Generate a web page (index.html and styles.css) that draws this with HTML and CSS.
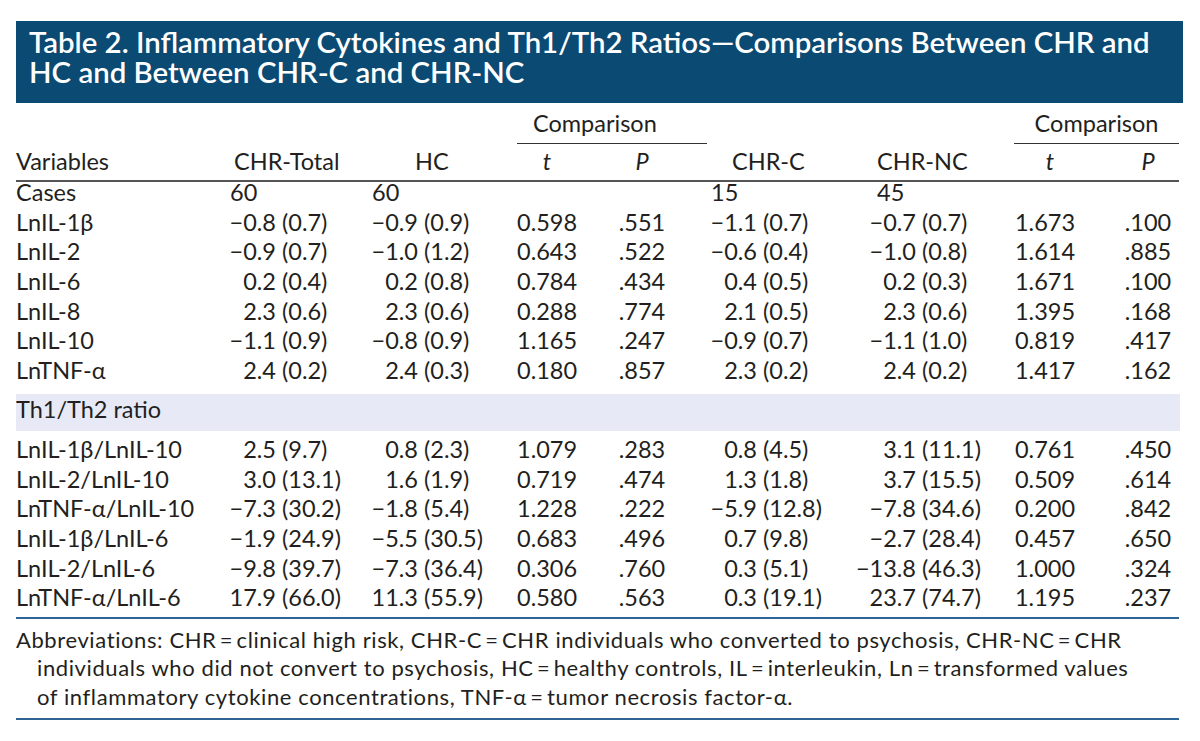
FILE: index.html
```html
<!DOCTYPE html>
<html lang="en">
<head>
<meta charset="utf-8">
<title>Table 2. Inflammatory Cytokines and Th1/Th2 Ratios</title>
<link rel="stylesheet" href="styles.css">
</head>
<body>
<div class="page">
  <div class="title">Table 2. Inflammatory Cytokines and Th1/Th2 Ratios—Comparisons Between CHR and<br>HC and Between CHR-C and CHR-NC</div>
  <div class="table">
    <div class="row group">
      <div class="g1">Comparison</div>
      <div class="g2">Comparison</div>
    </div>
    <div class="row head">
      <div>Variables</div>
      <div>CHR-Total</div>
      <div>HC</div>
      <div><i>t</i></div>
      <div><i>P</i></div>
      <div>CHR-C</div>
      <div>CHR-NC</div>
      <div><i>t</i></div>
      <div><i>P</i></div>
    </div>
    <div class="body">
      <div class="row cases">
        <div>Cases</div><div>60</div><div>60</div><div></div><div></div><div>15</div><div>45</div><div></div><div></div>
      </div>
      <div class="row">
        <div>LnIL-1β</div><div><span class="n">−0.8</span> (0.7)</div><div><span class="n">−0.9</span> (0.9)</div><div>0.598</div><div>.551</div><div><span class="n">−1.1</span> (0.7)</div><div><span class="n">−0.7</span> (0.7)</div><div>1.673</div><div>.100</div>
      </div>
      <div class="row">
        <div>LnIL-2</div><div><span class="n">−0.9</span> (0.7)</div><div><span class="n">−1.0</span> (1.2)</div><div>0.643</div><div>.522</div><div><span class="n">−0.6</span> (0.4)</div><div><span class="n">−1.0</span> (0.8)</div><div>1.614</div><div>.885</div>
      </div>
      <div class="row">
        <div>LnIL-6</div><div><span class="n">0.2</span> (0.4)</div><div><span class="n">0.2</span> (0.8)</div><div>0.784</div><div>.434</div><div><span class="n">0.4</span> (0.5)</div><div><span class="n">0.2</span> (0.3)</div><div>1.671</div><div>.100</div>
      </div>
      <div class="row">
        <div>LnIL-8</div><div><span class="n">2.3</span> (0.6)</div><div><span class="n">2.3</span> (0.6)</div><div>0.288</div><div>.774</div><div><span class="n">2.1</span> (0.5)</div><div><span class="n">2.3</span> (0.6)</div><div>1.395</div><div>.168</div>
      </div>
      <div class="row">
        <div>LnIL-10</div><div><span class="n">−1.1</span> (0.9)</div><div><span class="n">−0.8</span> (0.9)</div><div>1.165</div><div>.247</div><div><span class="n">−0.9</span> (0.7)</div><div><span class="n">−1.1</span> (1.0)</div><div>0.819</div><div>.417</div>
      </div>
      <div class="row">
        <div>LnTNF-α</div><div><span class="n">2.4</span> (0.2)</div><div><span class="n">2.4</span> (0.3)</div><div>0.180</div><div>.857</div><div><span class="n">2.3</span> (0.2)</div><div><span class="n">2.4</span> (0.2)</div><div>1.417</div><div>.162</div>
      </div>
    </div>
    <div class="band">Th1/Th2 ratio</div>
    <div class="body ratios">
      <div class="row">
        <div>LnIL-1β/LnIL-10</div><div><span class="n">2.5</span> (9.7)</div><div><span class="n">0.8</span> (2.3)</div><div>1.079</div><div>.283</div><div><span class="n">0.8</span> (4.5)</div><div><span class="n">3.1</span> (11.1)</div><div>0.761</div><div>.450</div>
      </div>
      <div class="row">
        <div>LnIL-2/LnIL-10</div><div><span class="n">3.0</span> (13.1)</div><div><span class="n">1.6</span> (1.9)</div><div>0.719</div><div>.474</div><div><span class="n">1.3</span> (1.8)</div><div><span class="n">3.7</span> (15.5)</div><div>0.509</div><div>.614</div>
      </div>
      <div class="row">
        <div>LnTNF-α/LnIL-10</div><div><span class="n">−7.3</span> (30.2)</div><div><span class="n">−1.8</span> (5.4)</div><div>1.228</div><div>.222</div><div><span class="n">−5.9</span> (12.8)</div><div><span class="n">−7.8</span> (34.6)</div><div>0.200</div><div>.842</div>
      </div>
      <div class="row">
        <div>LnIL-1β/LnIL-6</div><div><span class="n">−1.9</span> (24.9)</div><div><span class="n">−5.5</span> (30.5)</div><div>0.683</div><div>.496</div><div><span class="n">0.7</span> (9.8)</div><div><span class="n">−2.7</span> (28.4)</div><div>0.457</div><div>.650</div>
      </div>
      <div class="row">
        <div>LnIL-2/LnIL-6</div><div><span class="n">−9.8</span> (39.7)</div><div><span class="n">−7.3</span> (36.4)</div><div>0.306</div><div>.760</div><div><span class="n">0.3</span> (5.1)</div><div><span class="n">−13.8</span> (46.3)</div><div>1.000</div><div>.324</div>
      </div>
      <div class="row">
        <div>LnTNF-α/LnIL-6</div><div><span class="n">17.9</span> (66.0)</div><div><span class="n">11.3</span> (55.9)</div><div>0.580</div><div>.563</div><div><span class="n">0.3</span> (19.1)</div><div><span class="n">23.7</span> (74.7)</div><div>1.195</div><div>.237</div>
      </div>
    </div>
  </div>
  <div class="note">Abbreviations: CHR&thinsp;=&thinsp;clinical high risk, CHR-C&thinsp;=&thinsp;CHR individuals who converted to psychosis, CHR-NC&thinsp;=&thinsp;CHR<br>individuals who did not convert to psychosis, HC&thinsp;=&thinsp;healthy controls, IL&thinsp;=&thinsp;interleukin, Ln&thinsp;=&thinsp;transformed values<br>of inflammatory cytokine concentrations, TNF-α&thinsp;=&thinsp;tumor necrosis factor-α.</div>
</div>
</body>
</html>
```

FILE: styles.css
```css
html, body {
  margin: 0;
  padding: 0;
  background: #ffffff;
}

.page {
  padding: 21px 0 0 16px;
  font-family: Lato, "Open Sans", sans-serif;
  color: #231f20;
}

.title {
  width: 1154px;
  background: #0a4a73;
  color: #ffffff;
  font-weight: 600;
  font-size: 29.4px;
  line-height: 30px;
  padding: 6px 0 16px 13px;
  white-space: nowrap;
}

.table {
  width: 1163px;
  font-size: 23.5px;
  line-height: 29.7px;
}

.row {
  display: grid;
  grid-template-columns: 210px 142px 149px 60px 130px 144px 163px 62px 103px;
  white-space: nowrap;
}

.row > :nth-child(4),
.row > :nth-child(5),
.row > :nth-child(8) {
  text-align: center;
}

.row > :nth-child(9) {
  text-align: center;
  padding-left: 41px;
}

.n {
  display: inline-block;
  width: 50px;
  text-align: right;
}

.row > :nth-child(7) .n {
  width: 65px;
}

/* Group header row */
.group {
  margin-top: 6px;
}

.group .g1,
.group .g2 {
  padding-bottom: 4px;
  border-bottom: 1px solid #333333;
}

.group .g1 {
  grid-column: 4 / 6;
  text-align: left;
  padding-left: 16px;
}

.group .g2 {
  grid-column: 8 / 10;
  text-align: center;
  padding-left: 0;
}

/* Column headings */
.head {
  padding-top: 3px;
  padding-bottom: 4px;
  border-bottom: 2px solid #555555;
}

.head > :nth-child(2) { padding-left: 8px; }
.head > :nth-child(3) { padding-left: 47px; }
.head > :nth-child(6) { padding-left: 25px; }
.head > :nth-child(7) { padding-left: 26px; }
.head > :nth-child(8) { padding-left: 10px; }

.head i {
  font-style: italic;
}

.body {
  margin-top: -4.6px;
}

.cases > :nth-child(2),
.cases > :nth-child(3),
.cases > :nth-child(6) {
  padding-left: 4px;
}

.cases > :nth-child(7) {
  padding-left: 26px;
}

.band {
  margin-top: 7.8px;
  width: 1164px;
  background: #e7eaf6;
  padding: 1.4px 0 6px 0;
}

.ratios {
  margin-top: 4.3px;
  padding-bottom: 4px;
  border-bottom: 2px solid #2f6596;
}

.note {
  width: 1163px;
  font-size: 22px;
  letter-spacing: 0.6px;
  line-height: 28.5px;
  padding: 6.5px 0 6.5px 21px;
  text-indent: -21px;
  box-sizing: border-box;
  border-bottom: 2px solid #2f6596;
  white-space: nowrap;
}
```
